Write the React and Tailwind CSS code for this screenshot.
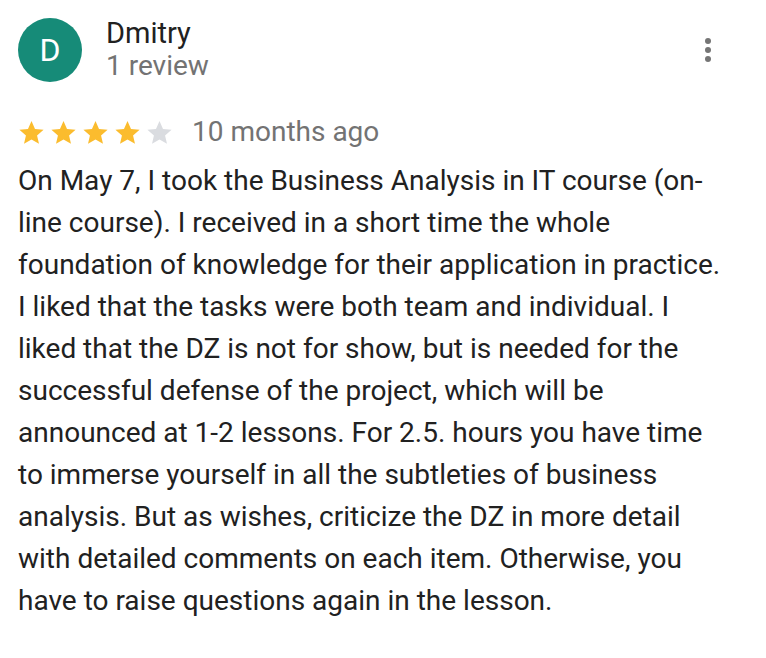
import React from "react";

const lines = [
  "On May 7, I took the Business Analysis in IT course (on-",
  "line course). I received in a short time the whole",
  "foundation of knowledge for their application in practice.",
  "I liked that the tasks were both team and individual. I",
  "liked that the DZ is not for show, but is needed for the",
  "successful defense of the project, which will be",
  "announced at 1-2 lessons. For 2.5. hours you have time",
  "to immerse yourself in all the subtleties of business",
  "analysis. But as wishes, criticize the DZ in more detail",
  "with detailed comments on each item. Otherwise, you",
  "have to raise questions again in the lesson.",
];

function Star({ filled }) {
  return (
    <svg width="29" height="29" viewBox="0 0 24 24" className="shrink-0">
      <path
        d="M12 2.5l2.9 6.6 7.1.6-5.4 4.7 1.6 7-6.2-3.7-6.2 3.7 1.6-7L2 9.7l7.1-.6z"
        fill={filled ? "#fbbc2e" : "#dadce0"}
      />
    </svg>
  );
}

export default function App() {
  return (
    <div
      className="w-[766px] h-[658px] bg-white text-[#212121]"
      style={{ fontFamily: "Roboto, 'Liberation Sans', sans-serif" }}
    >
      <div className="flex items-start pl-[18px] pt-[18px] pr-[55px]">
        <div className="w-[64px] h-[64px] rounded-full bg-[#168b78] flex items-center justify-center text-white text-[32px] leading-none shrink-0">
          D
        </div>
        <div className="ml-[24px] flex-1 -mt-[2px]">
          <div className="text-[29px] leading-[34px] text-[#212121]">Dmitry</div>
          <div className="text-[28px] leading-[32px] text-[#737373]">1 review</div>
        </div>
        <div className="flex flex-col items-center gap-[3px] mt-[20px]">
          <span className="w-[6px] h-[6px] rounded-full bg-[#757575]" />
          <span className="w-[6px] h-[6px] rounded-full bg-[#757575]" />
          <span className="w-[6px] h-[6px] rounded-full bg-[#757575]" />
        </div>
      </div>
      <div className="flex items-center pl-[17px] mt-[34px] h-[32px]">
        <div className="flex gap-[3px]">
          <Star filled />
          <Star filled />
          <Star filled />
          <Star filled />
          <Star />
        </div>
        <span className="ml-[18px] text-[28px] text-[#737373]">10 months ago</span>
      </div>
      <div className="pl-[18px] mt-[12px] text-[28px] leading-[42px]">
        {lines.map((l, i) => (
          <div key={i} className="whitespace-nowrap">{l}</div>
        ))}
      </div>
    </div>
  );
}
